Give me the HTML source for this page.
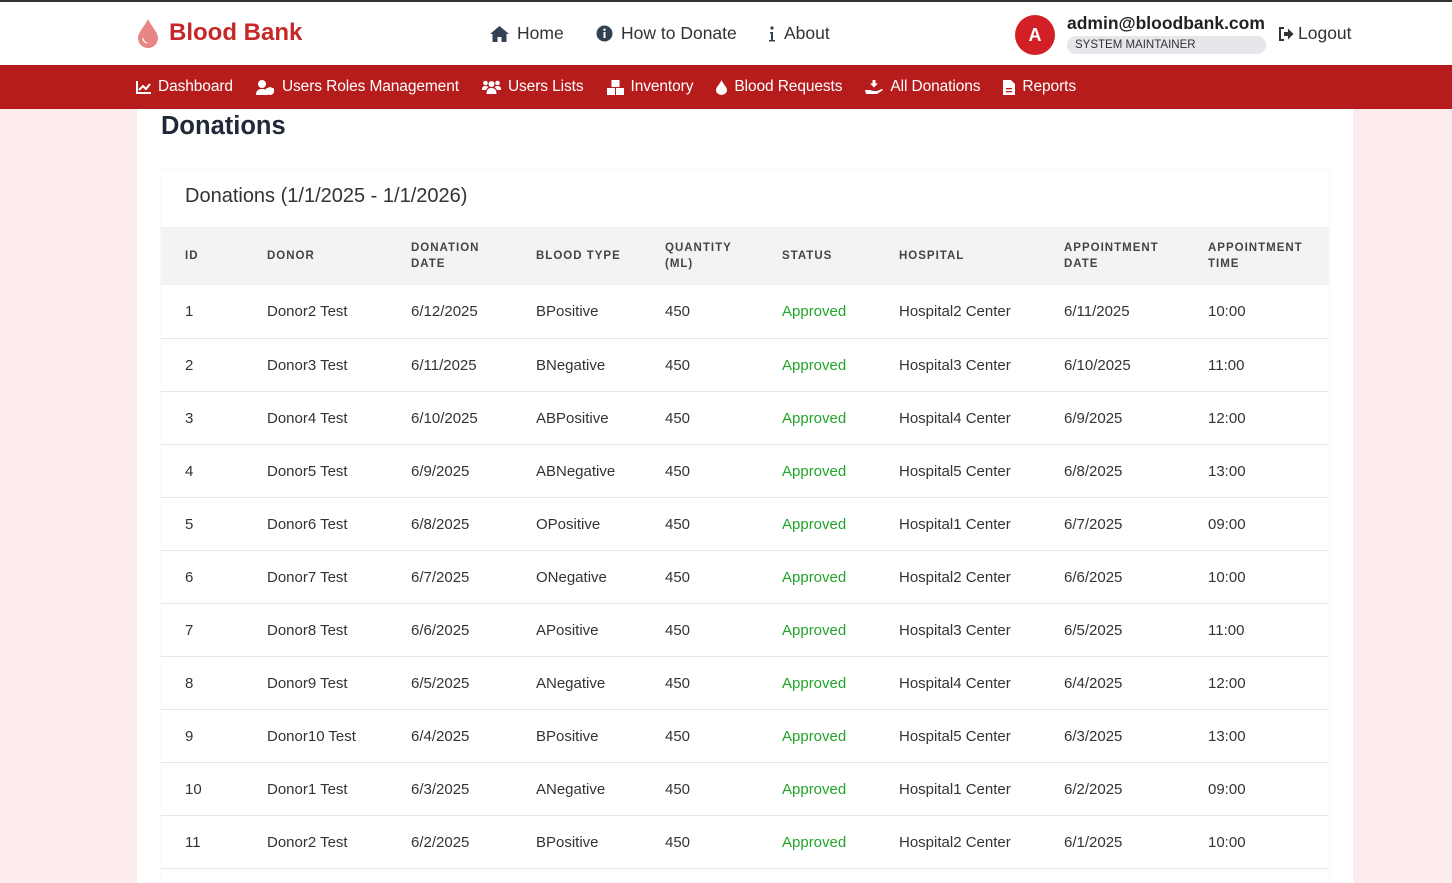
<!DOCTYPE html>
<html><head><meta charset="utf-8"><style>
*{box-sizing:border-box;margin:0;padding:0}
body{width:1452px;height:883px;overflow:hidden;background:#fdecee;font-family:"Liberation Sans",sans-serif;color:#1f2937;position:relative}
.top{position:absolute;left:0;top:0;width:1452px;height:65px;background:#fff;border-top:2px solid #333}
.logo{position:absolute;left:137px;top:16px;display:flex;align-items:center;gap:10px;color:#c62828;font-weight:bold;font-size:24px}
.nav{position:absolute;top:21px;display:flex;align-items:center;gap:8px;font-size:17.5px;color:#333}
.av{position:absolute;left:1015px;top:13px;width:40px;height:40px;border-radius:50%;background:#d32027;color:#fff;font-weight:bold;font-size:18px;display:flex;align-items:center;justify-content:center}
.email{position:absolute;left:1067px;top:11px;font-size:17.5px;font-weight:bold;color:#222}
.role{position:absolute;left:1067px;top:34px;width:199px;height:18px;border-radius:9px;background:#e5e7eb;font-size:11.5px;color:#333;padding-left:8px;line-height:18px}
.red{position:absolute;left:0;top:65px;width:1452px;height:44px;background:#b71c1c;display:flex;align-items:center;padding-left:136px;gap:23px;color:#fff;font-size:15.5px;letter-spacing:-0.1px}
.red span{display:flex;align-items:center;gap:7px}
.main{position:absolute;left:137px;top:109px;width:1216px;height:774px;background:#fff}
h1{position:absolute;left:161px;top:112px;font-size:25.5px;font-weight:bold;color:#1f2937}
.card{position:absolute;left:161px;top:170px;width:1168px;height:713px;background:#fff;box-shadow:0 0 4px rgba(0,0,0,.06)}
.ct{position:absolute;left:24px;top:15px;font-size:20px;color:#333}
table{position:absolute;left:0;top:57px;width:1168px;border-collapse:collapse}
th{background:#f1f3f5;height:58px;text-align:left;font-size:11.5px;letter-spacing:1px;color:#444;font-weight:bold;line-height:16px;padding:0}
td{height:53px;border-bottom:1px solid #e5e7eb;font-size:15px;color:#333;padding:0;padding-top:1px}
td:first-child,th:first-child{padding-left:24px}
.ok{color:#22a42a}
</style></head><body>
<div class="top">
<div class="logo"><svg width="22" height="30" viewBox="0 0 22 30"><path d="M11 1C8 8 1 14 1 20a10 10 0 0 0 20 0C21 14 14 8 11 1z" fill="#e88585"/><path d="M6 20a5 5 0 0 0 4 5" stroke="#fff" fill="none" stroke-width="1.2"/></svg>Blood Bank</div>
<div class="nav" style="left:490px"><svg width="19" height="16" viewBox="0 0 19 16"><path d="M9.5 0L0 8h2.5v8h5v-5h4v5h5V8H19z" fill="#334155"/></svg>Home</div>
<div class="nav" style="left:596px"><svg width="17" height="17"><circle cx="8.5" cy="8.5" r="8" fill="#334155"/><rect x="7.5" y="7" width="2" height="6" fill="#fff"/><circle cx="8.5" cy="4.7" r="1.2" fill="#fff"/></svg>How to Donate</div>
<div class="nav" style="left:768px"><svg width="8" height="17"><circle cx="4" cy="3" r="1.6" fill="#334155"/><path d="M2 7h3v8h2v1.5H1V15h2V8.5H2z" fill="#334155"/></svg>About</div>
<div class="av">A</div>
<div class="email">admin@bloodbank.com</div>
<div class="role">SYSTEM MAINTAINER</div>
<div class="nav" style="left:1278px;gap:4px"><svg width="16" height="14" viewBox="0 0 16 14"><path d="M6 1H2v12h4" stroke="#333" stroke-width="2" fill="none"/><path d="M6 5h4V1.5L15.5 7 10 12.5V9H6z" fill="#333"/></svg>Logout</div>
</div>
<div class="red">
<span><svg width="15" height="13"><path d="M1 0v12h14" stroke="#fff" stroke-width="2" fill="none"/><path d="M3 9l4-4 3 3 4-5" stroke="#fff" stroke-width="2" fill="none"/></svg>Dashboard</span>
<span><svg width="19" height="15"><circle cx="6" cy="4" r="4" fill="#fff"/><path d="M0 15c0-5 3-6 6-6s5 1 6 2v4z" fill="#fff"/><path d="M14 7l4 1.5v3c0 2-2 3.5-4 3.5s-4-1.5-4-3.5v-3z" fill="#fff"/></svg>Users Roles Management</span>
<span><svg width="19" height="14"><circle cx="9.5" cy="4" r="3" fill="#fff"/><circle cx="3.5" cy="3" r="2.3" fill="#fff"/><circle cx="15.5" cy="3" r="2.3" fill="#fff"/><path d="M4.5 14c0-5 2.5-6 5-6s5 1 5 6zM0 9c0-2 1.5-3 3.5-3s3 1 3 1c-1 .8-2 1.8-2.3 3H0zM19 9c0-2-1.5-3-3.5-3s-3 1-3 1c1 .8 2 1.8 2.3 3H19z" fill="#fff"/></svg>Users Lists</span>
<span><svg width="17" height="15"><rect x="4.5" y="0" width="8" height="7" fill="#fff"/><rect x="0" y="8" width="8" height="7" fill="#fff"/><rect x="9" y="8" width="8" height="7" fill="#fff"/></svg>Inventory</span>
<span><svg width="11" height="15" viewBox="0 0 11 15"><path d="M5.5 0C4 4 0 7 0 10a5.5 5 0 0 0 11 0C11 7 7 4 5.5 0z" fill="#fff"/></svg>Blood Requests</span>
<span><svg width="18" height="15"><path d="M7.5 0h3v3.5H13L9 7.5 5 3.5h2.5z" fill="#fff"/><path d="M0 10h4c2 0 3 1 5 1h3l5-2 1 1-6 4H1z" fill="#fff"/></svg>All Donations</span>
<span><svg width="12" height="15"><path d="M0 0h8l4 4v11H0z" fill="#fff"/><rect x="3" y="8" width="6" height="1.3" fill="#b71c1c"/><rect x="3" y="11" width="6" height="1.3" fill="#b71c1c"/></svg>Reports</span>
</div>
<div class="main"></div>
<h1>Donations</h1>
<div class="card">
<div class="ct">Donations (1/1/2025 - 1/1/2026)</div>
<table>
<colgroup><col style="width:106px"><col style="width:144px"><col style="width:125px"><col style="width:129px"><col style="width:117px"><col style="width:117px"><col style="width:165px"><col style="width:144px"><col></colgroup>
<tr><th>ID</th><th>DONOR</th><th>DONATION<br>DATE</th><th>BLOOD TYPE</th><th>QUANTITY<br>(ML)</th><th>STATUS</th><th>HOSPITAL</th><th>APPOINTMENT<br>DATE</th><th>APPOINTMENT<br>TIME</th></tr>
<tr><td>1</td><td>Donor2 Test</td><td>6/12/2025</td><td>BPositive</td><td>450</td><td class="ok">Approved</td><td>Hospital2 Center</td><td>6/11/2025</td><td>10:00</td></tr>
<tr><td>2</td><td>Donor3 Test</td><td>6/11/2025</td><td>BNegative</td><td>450</td><td class="ok">Approved</td><td>Hospital3 Center</td><td>6/10/2025</td><td>11:00</td></tr>
<tr><td>3</td><td>Donor4 Test</td><td>6/10/2025</td><td>ABPositive</td><td>450</td><td class="ok">Approved</td><td>Hospital4 Center</td><td>6/9/2025</td><td>12:00</td></tr>
<tr><td>4</td><td>Donor5 Test</td><td>6/9/2025</td><td>ABNegative</td><td>450</td><td class="ok">Approved</td><td>Hospital5 Center</td><td>6/8/2025</td><td>13:00</td></tr>
<tr><td>5</td><td>Donor6 Test</td><td>6/8/2025</td><td>OPositive</td><td>450</td><td class="ok">Approved</td><td>Hospital1 Center</td><td>6/7/2025</td><td>09:00</td></tr>
<tr><td>6</td><td>Donor7 Test</td><td>6/7/2025</td><td>ONegative</td><td>450</td><td class="ok">Approved</td><td>Hospital2 Center</td><td>6/6/2025</td><td>10:00</td></tr>
<tr><td>7</td><td>Donor8 Test</td><td>6/6/2025</td><td>APositive</td><td>450</td><td class="ok">Approved</td><td>Hospital3 Center</td><td>6/5/2025</td><td>11:00</td></tr>
<tr><td>8</td><td>Donor9 Test</td><td>6/5/2025</td><td>ANegative</td><td>450</td><td class="ok">Approved</td><td>Hospital4 Center</td><td>6/4/2025</td><td>12:00</td></tr>
<tr><td>9</td><td>Donor10 Test</td><td>6/4/2025</td><td>BPositive</td><td>450</td><td class="ok">Approved</td><td>Hospital5 Center</td><td>6/3/2025</td><td>13:00</td></tr>
<tr><td>10</td><td>Donor1 Test</td><td>6/3/2025</td><td>ANegative</td><td>450</td><td class="ok">Approved</td><td>Hospital1 Center</td><td>6/2/2025</td><td>09:00</td></tr>
<tr><td>11</td><td>Donor2 Test</td><td>6/2/2025</td><td>BPositive</td><td>450</td><td class="ok">Approved</td><td>Hospital2 Center</td><td>6/1/2025</td><td>10:00</td></tr>
</table>
</div>
</body></html>
